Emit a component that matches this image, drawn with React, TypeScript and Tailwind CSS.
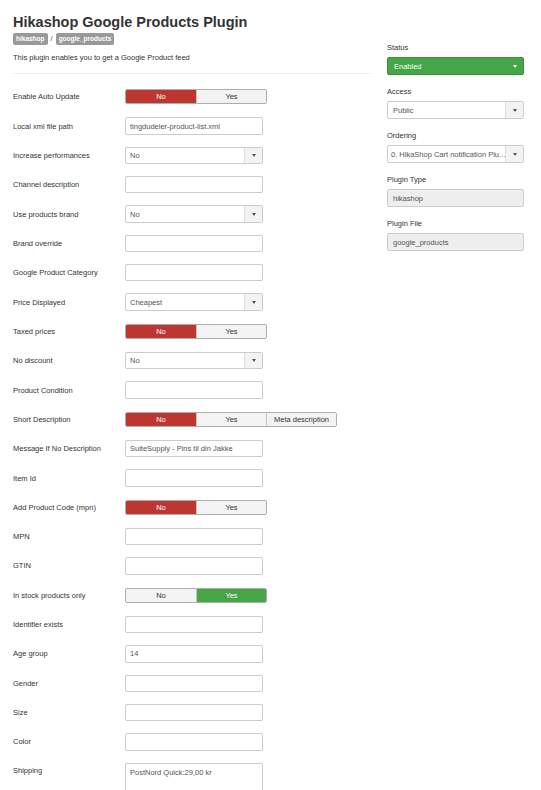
import React from 'react';

type Field =
  | { label: string; kind: 'toggle'; options: string[]; active: number; tone: 'red' | 'green' }
  | { label: string; kind: 'input'; value?: string }
  | { label: string; kind: 'select'; value: string }
  | { label: string; kind: 'textarea'; value: string };

const fields: Field[] = [
  { label: 'Enable Auto Update', kind: 'toggle', options: ['No', 'Yes'], active: 0, tone: 'red' },
  { label: 'Local xml file path', kind: 'input', value: 'tingdudeler-product-list.xml' },
  { label: 'Increase performances', kind: 'select', value: 'No' },
  { label: 'Channel description', kind: 'input' },
  { label: 'Use products brand', kind: 'select', value: 'No' },
  { label: 'Brand override', kind: 'input' },
  { label: 'Google Product Category', kind: 'input' },
  { label: 'Price Displayed', kind: 'select', value: 'Cheapest' },
  { label: 'Taxed prices', kind: 'toggle', options: ['No', 'Yes'], active: 0, tone: 'red' },
  { label: 'No discount', kind: 'select', value: 'No' },
  { label: 'Product Condition', kind: 'input' },
  { label: 'Short Description', kind: 'toggle', options: ['No', 'Yes', 'Meta description'], active: 0, tone: 'red' },
  { label: 'Message If No Description', kind: 'input', value: 'SuiteSupply - Pins til din Jakke' },
  { label: 'Item Id', kind: 'input' },
  { label: 'Add Product Code (mpn)', kind: 'toggle', options: ['No', 'Yes'], active: 0, tone: 'red' },
  { label: 'MPN', kind: 'input' },
  { label: 'GTIN', kind: 'input' },
  { label: 'In stock products only', kind: 'toggle', options: ['No', 'Yes'], active: 1, tone: 'green' },
  { label: 'Identifier exists', kind: 'input' },
  { label: 'Age group', kind: 'input', value: '14' },
  { label: 'Gender', kind: 'input' },
  { label: 'Size', kind: 'input' },
  { label: 'Color', kind: 'input' },
  { label: 'Shipping', kind: 'textarea', value: 'PostNord Quick:29,00 kr' },
];

const Caret: React.FC<{ light?: boolean }> = ({ light }) => (
  <span
    className={`inline-block w-0 h-0 border-x-[2.5px] border-x-transparent border-t-[3px] ${
      light ? 'border-t-white' : 'border-t-[#555]'
    }`}
  />
);

const Toggle: React.FC<{ options: string[]; active: number; tone: 'red' | 'green' }> = ({ options, active, tone }) => (
  <div className="flex h-[15px] rounded-[2px] border border-[#adadad] overflow-hidden">
    {options.map((opt, i) => {
      const on = i === active;
      const onCls = tone === 'red' ? 'bg-[#bd362f] text-white' : 'bg-[#46a546] text-white';
      return (
        <div
          key={opt}
          className={`w-[70px] flex items-center justify-center ${i > 0 ? 'border-l border-[#c6c6c6]' : ''} ${
            on ? onCls : 'bg-[#f3f3f3] text-[#333]'
          }`}
        >
          {opt}
        </div>
      );
    })}
  </div>
);

const TextBox: React.FC<{ value?: string }> = ({ value }) => (
  <div className="w-[138px] h-[17.5px] flex items-center px-[4px] bg-white border border-[#ccc] rounded-[2px] text-[#555]">
    {value}
  </div>
);

const Select: React.FC<{ value: string }> = ({ value }) => (
  <div className="w-[138px] h-[17.5px] flex bg-white border border-[#ccc] rounded-[2px] text-[#555]">
    <div className="flex-1 flex items-center px-[4px]">{value}</div>
    <div className="w-[18px] flex items-center justify-center bg-[#f3f3f3] border-l border-[#ddd]">
      <Caret />
    </div>
  </div>
);

const Control: React.FC<{ field: Field }> = ({ field }) => {
  switch (field.kind) {
    case 'toggle':
      return <Toggle options={field.options} active={field.active} tone={field.tone} />;
    case 'input':
      return <TextBox value={field.value} />;
    case 'select':
      return <Select value={field.value} />;
    case 'textarea':
      return (
        <div className="w-[138px] h-[48px] mt-[6.3px] px-[4px] pt-[3px] bg-white border border-[#ccc] rounded-[2px] text-[#555]">
          {field.value}
        </div>
      );
  }
};

const SideGroup: React.FC<{ label: string; children: React.ReactNode }> = ({ label, children }) => (
  <div className="mb-[10.6px]">
    <div className="leading-[11px] mb-[4.5px]">{label}</div>
    {children}
  </div>
);

export default function App() {
  return (
    <div
      className="w-[541px] min-h-[790px] bg-white text-[#333] text-[7.5px] leading-[11px] pl-[13px] flex gap-[16px]"
      style={{ fontFamily: '"Liberation Sans", Arial, sans-serif' }}
    >
      {/* main settings column */}
      <div className="w-[358px] pb-[20px]">
        <h1 className="mt-[13.6px] text-[14.5px] leading-[17px] font-bold text-[#333]">
          Hikashop Google Products Plugin
        </h1>
        <div className="mt-[2.4px] flex items-center gap-[3px] h-[12px]">
          <span className="h-[12px] px-[3px] rounded-[2px] bg-[#999] text-white font-bold text-[6.5px] flex items-center">
            hikashop
          </span>
          <span className="text-[#555]">/</span>
          <span className="h-[12px] px-[3px] rounded-[2px] bg-[#999] text-white font-bold text-[6.5px] flex items-center">
            google_products
          </span>
        </div>
        <p className="mt-[6.8px]">This plugin enables you to get a Google Product feed</p>
        <hr className="mt-[10px] border-0 border-t border-[#eee]" />

        <div className="mt-[8.3px] flex flex-col">
          {fields.map((f) =>
            f.kind === 'textarea' ? (
              <div key={f.label} className="flex items-start">
                <div className="w-[112px] mt-[8px]">{f.label}</div>
                <Control field={f} />
              </div>
            ) : (
              <div key={f.label} className="h-[29.33px] flex items-center">
                <div className="w-[112px]">{f.label}</div>
                <Control field={f} />
              </div>
            )
          )}
        </div>
      </div>

      {/* plugin details sidebar */}
      <div className="w-[137px] pt-[41.5px]">
        <SideGroup label="Status">
          <div className="h-[18px] flex items-center justify-between px-[6px] bg-[#46a546] border border-[#3b8f3b] rounded-[2px] text-white">
            <span>Enabled</span>
            <Caret light />
          </div>
        </SideGroup>
        <SideGroup label="Access">
          <div className="h-[18px] flex bg-white border border-[#ccc] rounded-[2px] text-[#555]">
            <div className="flex-1 flex items-center px-[5px]">Public</div>
            <div className="w-[18px] flex items-center justify-center bg-[#f3f3f3] border-l border-[#ddd]">
              <Caret />
            </div>
          </div>
        </SideGroup>
        <SideGroup label="Ordering">
          <div className="h-[18px] flex bg-white border border-[#ccc] rounded-[2px] text-[#555]">
            <div className="flex-1 min-w-0 flex items-center px-[3px] whitespace-nowrap overflow-hidden">
              0. HikaShop Cart notification Plu...
            </div>
            <div className="w-[18px] shrink-0 flex items-center justify-center bg-[#f3f3f3] border-l border-[#ddd]">
              <Caret />
            </div>
          </div>
        </SideGroup>
        <SideGroup label="Plugin Type">
          <div className="h-[18px] flex items-center px-[5px] bg-[#eee] border border-[#ccc] rounded-[2px] text-[#555]">
            hikashop
          </div>
        </SideGroup>
        <SideGroup label="Plugin File">
          <div className="h-[18px] flex items-center px-[5px] bg-[#eee] border border-[#ccc] rounded-[2px] text-[#555]">
            google_products
          </div>
        </SideGroup>
      </div>
    </div>
  );
}
